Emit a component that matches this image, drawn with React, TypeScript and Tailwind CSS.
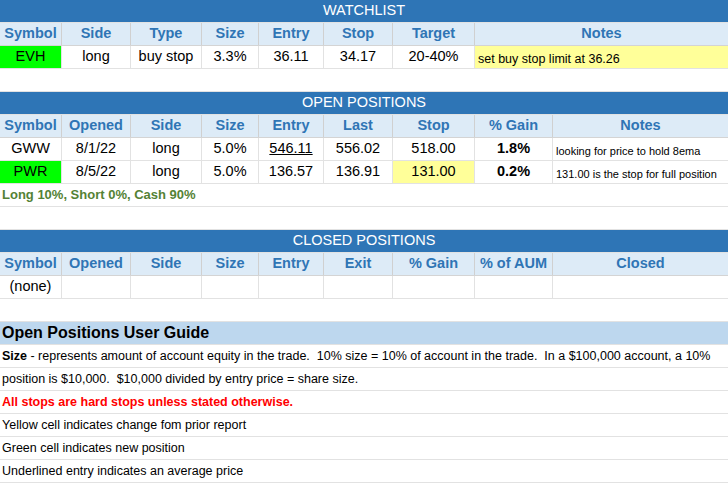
import React from "react";

const W = "grid grid-cols-[62px_69px_71px_57px_65px_69px_82px_1fr]";
const O = "grid grid-cols-[62px_69px_71px_57px_65px_69px_82px_78px_1fr]";

function Title({ t }: { t: string }) {
  return <div className="h-[23px] bg-[#2e75b6] text-white text-[14.5px] flex items-center justify-center border-b border-[#e2e2e2]">{t}</div>;
}
function Head({ cols, g }: { cols: string[]; g: string }) {
  return (
    <div className={`${g} h-[23px] bg-[#ddebf7] border-b border-[#d4d4d4]`}>
      {cols.map((c, i) => (
        <div key={i} className="flex items-center justify-center font-bold text-[14.5px] text-[#2f75b5] border-r border-[#d0d0d0] last:border-r-0 whitespace-nowrap">{c}</div>
      ))}
    </div>
  );
}
type C = { t?: React.ReactNode; cls?: string };
function Row({ cells, g }: { cells: C[]; g: string }) {
  return (
    <div className={`${g} h-[23px] border-b border-[#e2e2e2]`}>
      {cells.map((c, i) => (
        <div key={i} className={`flex items-center text-black border-r border-[#e2e2e2] last:border-r-0 whitespace-nowrap overflow-hidden ${c.cls ?? "justify-center text-[14.5px]"}`}>{c.t}</div>
      ))}
    </div>
  );
}
const Blank = () => <div className="h-[23px] border-b border-[#e2e2e2]" />;
const G = ({ children, cls = "text-[12.5px] text-black" }: { children: React.ReactNode; cls?: string }) => (
  <div className={`h-[23px] border-b border-[#e2e2e2] flex items-center px-[2px] whitespace-nowrap ${cls}`}>{children}</div>
);

export default function App() {
  const c = "justify-center text-[14.5px]";
  const green = `${c} bg-[#00ff00]`;
  const note = "justify-start pl-[3px] pt-[4px]";
  return (
    <div className="w-[728px] h-[485px] bg-white overflow-hidden" style={{ fontFamily: '"Liberation Sans", Arial, sans-serif' }}>
      <Title t="WATCHLIST" />
      <Head g={W} cols={["Symbol", "Side", "Type", "Size", "Entry", "Stop", "Target", "Notes"]} />
      <Row g={W} cells={[{ t: "EVH", cls: green }, { t: "long" }, { t: "buy stop" }, { t: "3.3%" }, { t: "36.11" }, { t: "34.17" }, { t: "20-40%" }, { t: "set buy stop limit at 36.26", cls: `bg-[#ffff99] text-[12.5px] ${note}` }]} />
      <Blank />
      <Title t="OPEN POSITIONS" />
      <Head g={O} cols={["Symbol", "Opened", "Side", "Size", "Entry", "Last", "Stop", "% Gain", "Notes"]} />
      <Row g={O} cells={[{ t: "GWW" }, { t: "8/1/22" }, { t: "long" }, { t: "5.0%" }, { t: <span className="underline">546.11</span> }, { t: "556.02" }, { t: "518.00" }, { t: "1.8%", cls: `${c} font-bold` }, { t: "looking for price to hold 8ema", cls: `text-[11px] ${note}` }]} />
      <Row g={O} cells={[{ t: "PWR", cls: green }, { t: "8/5/22" }, { t: "long" }, { t: "5.0%" }, { t: "136.57" }, { t: "136.91" }, { t: "131.00", cls: `${c} bg-[#ffff99]` }, { t: "0.2%", cls: `${c} font-bold` }, { t: "131.00 is the stop for full position", cls: `text-[11px] ${note}` }]} />
      <G cls="font-bold text-[#548235] text-[13px]">Long 10%, Short 0%, Cash 90%</G>
      <Blank />
      <Title t="CLOSED POSITIONS" />
      <Head g={O} cols={["Symbol", "Opened", "Side", "Size", "Entry", "Exit", "% Gain", "% of AUM", "Closed"]} />
      <Row g={O} cells={[{ t: "(none)" }, {}, {}, {}, {}, {}, {}, {}, {}]} />
      <Blank />
      <div className="h-[23px] bg-[#bdd7ee] border-b border-[#e2e2e2] flex items-center px-[2px] text-[16px] font-bold text-black">Open Positions User Guide</div>
      <G><b>Size</b>&nbsp;- represents amount of account equity in the trade.&nbsp; 10% size = 10% of account in the trade.&nbsp; In a $100,000 account, a 10%</G>
      <G>position is $10,000.&nbsp; $10,000 divided by entry price = share size.</G>
      <G cls="font-bold text-[#ff0000] text-[12.5px]">All stops are hard stops unless stated otherwise.</G>
      <G>Yellow cell indicates change fom prior report</G>
      <G>Green cell indicates new position</G>
      <G>Underlined entry indicates an average price</G>
    </div>
  );
}
